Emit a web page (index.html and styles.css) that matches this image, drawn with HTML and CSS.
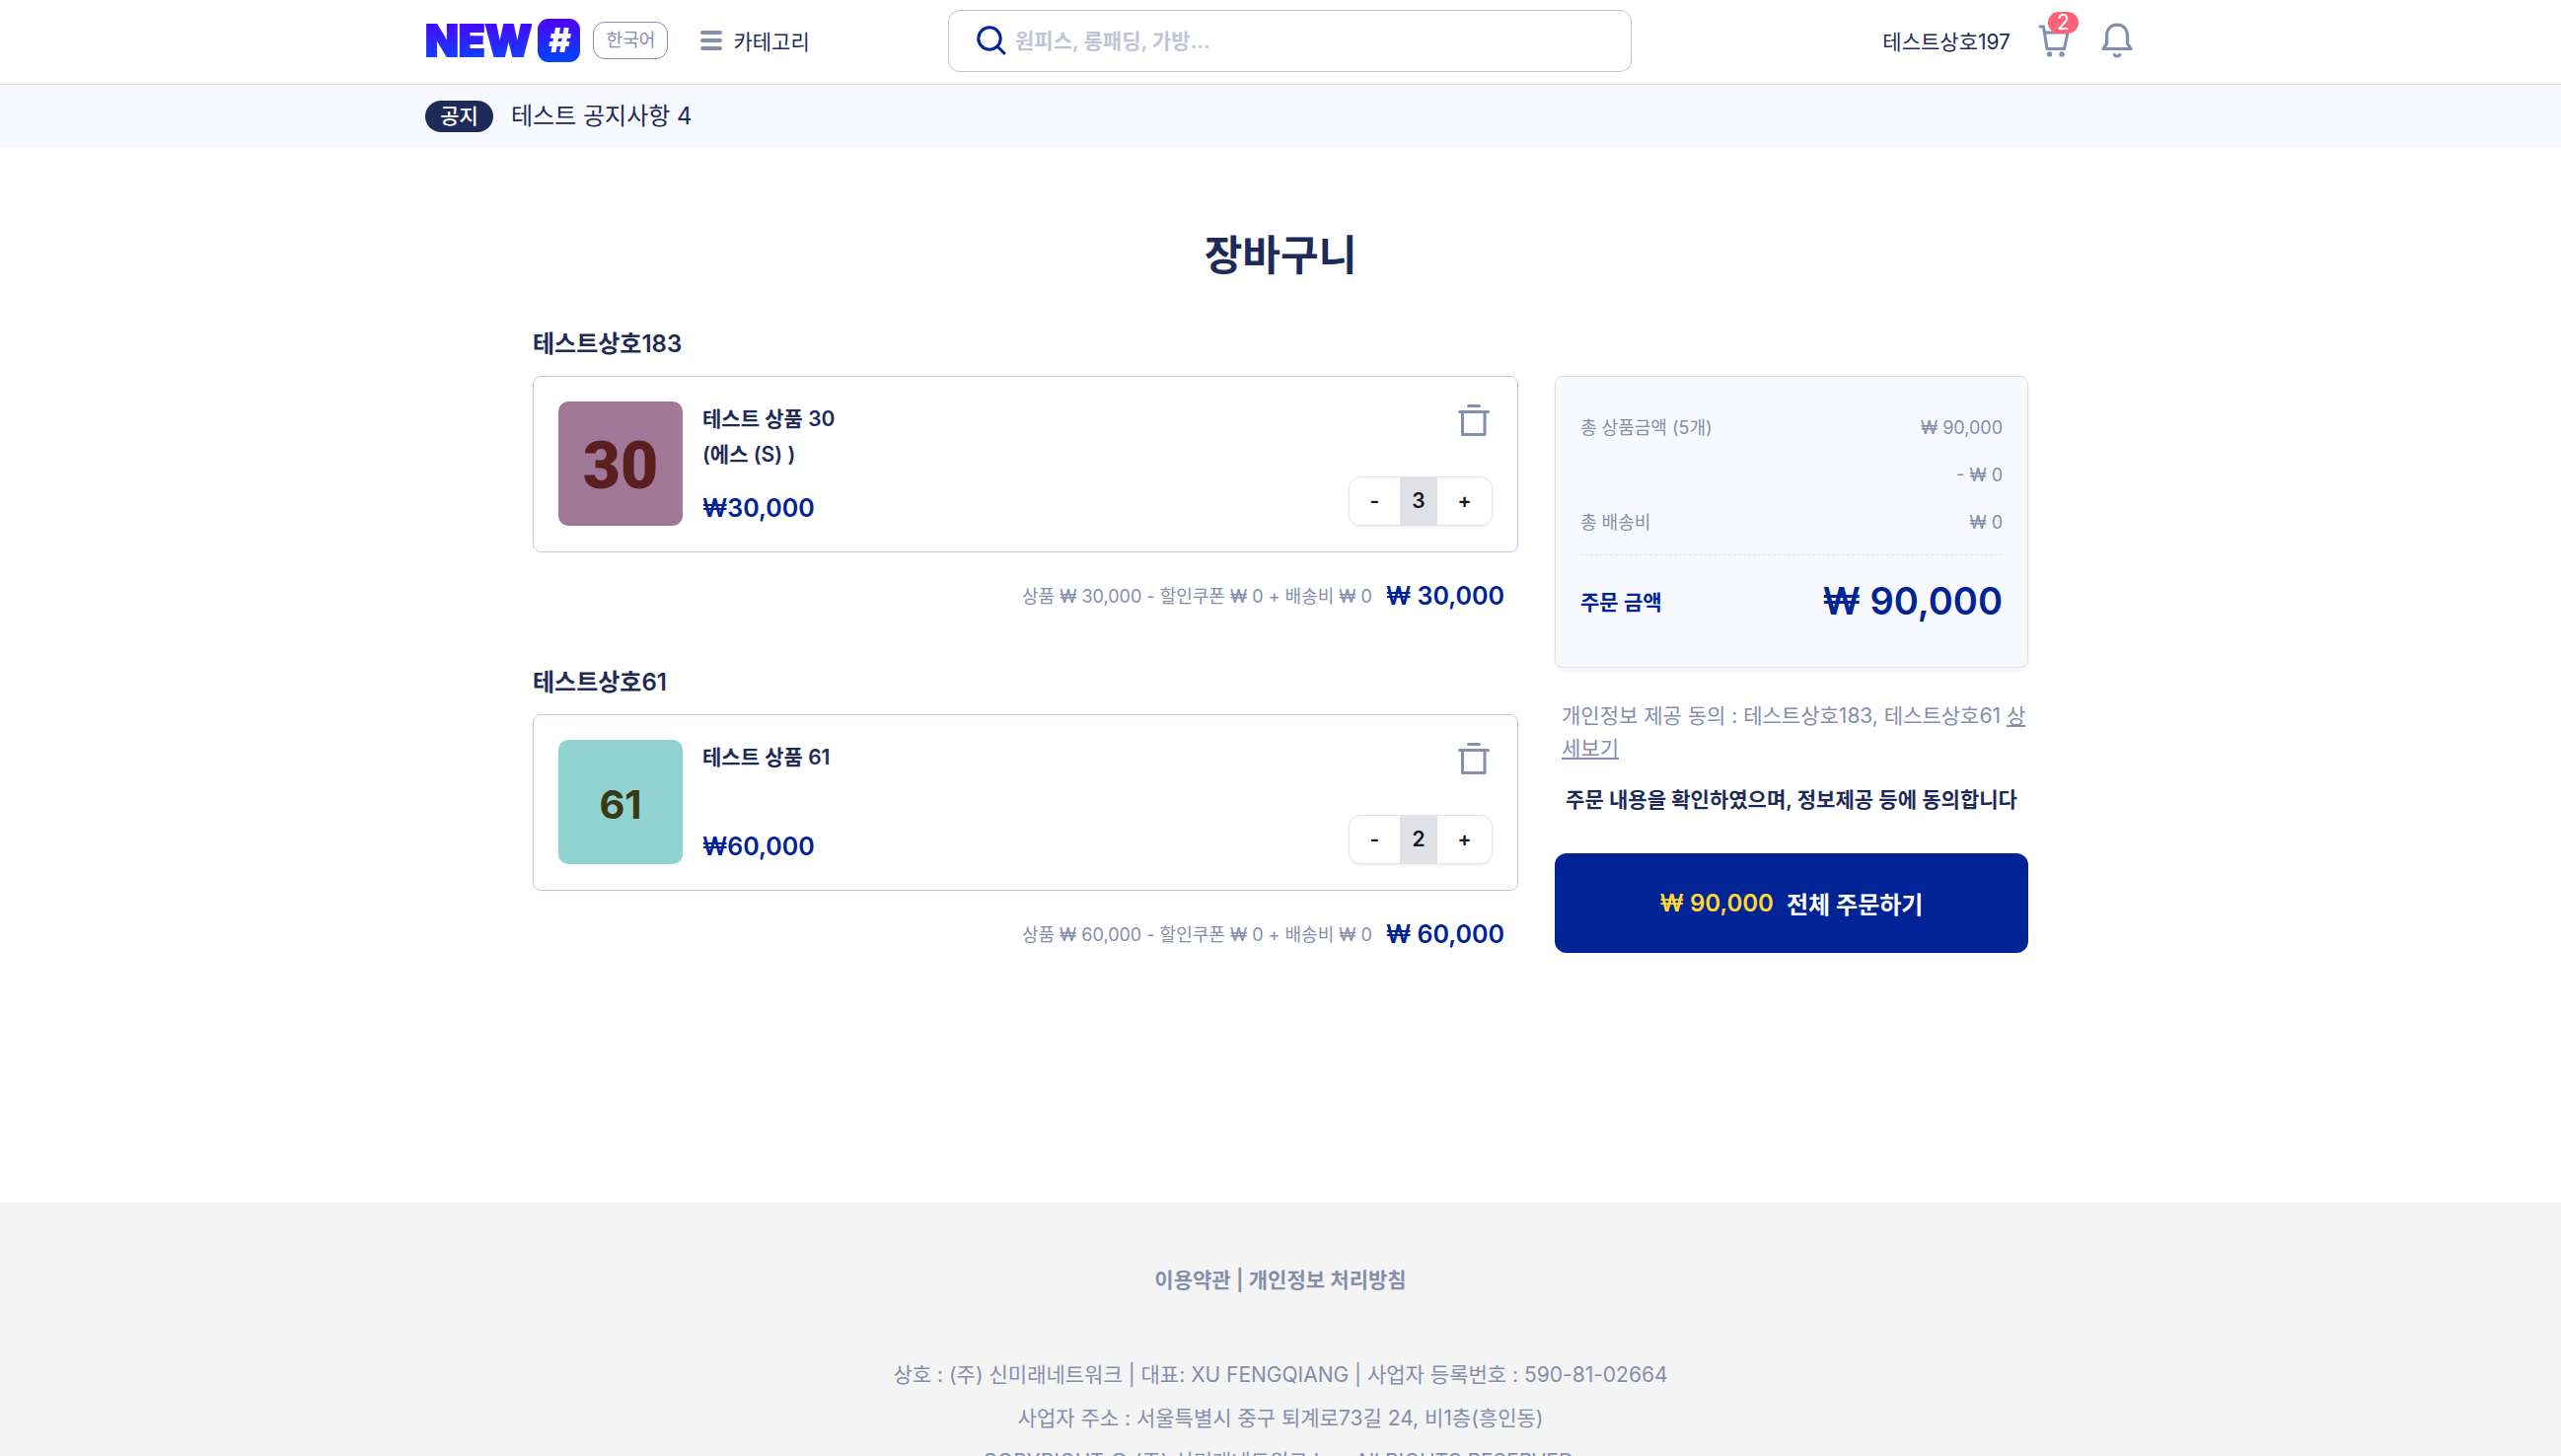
FILE: index.html
```html
<!DOCTYPE html>
<html lang="ko">
<head>
<meta charset="utf-8">
<meta name="viewport" content="width=device-width, initial-scale=1">
<title>장바구니</title>
<link rel="stylesheet" href="styles.css">
</head>
<body>
<header class="header">
  <div class="container header-row">
    <div class="header-left">
      <a class="logo" href="#"><span class="logo-word">NEW</span><span class="logo-hash">#</span></a>
      <button class="lang" type="button">한국어</button>
      <button class="category" type="button">
        <svg width="22" height="20" viewBox="0 0 22 20" aria-hidden="true"><path d="M2 2h18M2 10h18M2 18h18" stroke="currentColor" stroke-width="4" stroke-linecap="round"/></svg>
        <span>카테고리</span>
      </button>
    </div>
    <form class="search" role="search">
      <svg width="30" height="30" viewBox="0 0 30 30" aria-hidden="true"><g fill="none" stroke="currentColor" stroke-width="3" stroke-linecap="round"><circle cx="13" cy="13" r="11.2"/><path d="M21.5 21.5l6.5 6.5"/></g></svg>
      <input class="search-input" type="text" aria-label="검색" placeholder="원피스, 롱패딩, 가방...">
    </form>
    <nav class="header-right">
      <a class="user" href="#">테스트상호197</a>
      <a class="cart-link" href="#" aria-label="장바구니">
        <svg width="32" height="34" viewBox="0 0 32 34" aria-hidden="true"><g fill="none" stroke="currentColor" stroke-width="3" stroke-linecap="round" stroke-linejoin="round"><path d="M2 3h3.500L9 25.500h17.500L30 9H6.500"/></g><circle cx="11.500" cy="31" r="2.700" fill="currentColor"/><circle cx="24" cy="31" r="2.700" fill="currentColor"/></svg>
        <span class="badge">2</span>
      </a>
      <a class="bell-link" href="#" aria-label="알림">
        <svg width="32" height="36" viewBox="0 0 32 36" aria-hidden="true"><g fill="none" stroke="currentColor" stroke-width="3.200" stroke-linecap="round" stroke-linejoin="round"><path d="M2 26.500h28L26.500 21V12.500C26 6 22 2.200 16 2.200S6 6 5.600 12.500V21z"/><path d="M13.200 32.500c1.300 2 4.300 2 5.600 0"/></g></svg>
      </a>
    </nav>
  </div>
</header>

<section class="notice">
  <div class="container notice-row">
    <span class="notice-tag">공지</span>
    <a class="notice-text" href="#">테스트 공지사항 4</a>
  </div>
</section>

<main class="cart">
  <h1 class="title">장바구니</h1>
  <div class="cart-grid">
    <div class="shops">
      <section class="shop">
        <h2 class="shop-name">테스트상호183</h2>
        <article class="item">
          <div class="thumb thumb-plum">30</div>
          <div class="item-info">
            <p class="item-name">테스트 상품 30<br>(에스 (S) )</p>
            <p class="item-price">₩30,000</p>
          </div>
          <div class="item-actions">
            <button class="trash" type="button" aria-label="삭제"><svg width="32" height="32" viewBox="0 0 32 32" aria-hidden="true"><g fill="none" stroke="currentColor" stroke-width="3" stroke-linecap="round" stroke-linejoin="round"><path d="M10.500 1.500h11M1.500 7.500h29M4.500 7.500v23h22.500v-23"/></g></svg></button>
            <div class="qty"><button class="qty-minus" type="button">-</button><output class="qty-value">3</output><button class="qty-plus" type="button">+</button></div>
          </div>
        </article>
        <p class="subtotal"><span>상품 ₩ 30,000 - 할인쿠폰 ₩ 0 + 배송비 ₩ 0</span><strong>₩ 30,000</strong></p>
      </section>
      <section class="shop">
        <h2 class="shop-name">테스트상호61</h2>
        <article class="item">
          <div class="thumb thumb-mint">61</div>
          <div class="item-info">
            <p class="item-name">테스트 상품 61</p>
            <p class="item-price">₩60,000</p>
          </div>
          <div class="item-actions">
            <button class="trash" type="button" aria-label="삭제"><svg width="32" height="32" viewBox="0 0 32 32" aria-hidden="true"><g fill="none" stroke="currentColor" stroke-width="3" stroke-linecap="round" stroke-linejoin="round"><path d="M10.500 1.500h11M1.500 7.500h29M4.500 7.500v23h22.500v-23"/></g></svg></button>
            <div class="qty"><button class="qty-minus" type="button">-</button><output class="qty-value">2</output><button class="qty-plus" type="button">+</button></div>
          </div>
        </article>
        <p class="subtotal"><span>상품 ₩ 60,000 - 할인쿠폰 ₩ 0 + 배송비 ₩ 0</span><strong>₩ 60,000</strong></p>
      </section>
    </div>

    <aside class="order">
      <div class="summary">
        <div class="sum-row"><span>총 상품금액 (5개)</span><span>₩ 90,000</span></div>
        <div class="sum-row sum-discount"><span>- ₩ 0</span></div>
        <div class="sum-row"><span>총 배송비</span><span>₩ 0</span></div>
        <div class="sum-total"><span class="total-label">주문 금액</span><strong class="total-value">₩ 90,000</strong></div>
      </div>
      <p class="consent">개인정보 제공 동의 : 테스트상호183, 테스트상호61 <a href="#">상세보기</a></p>
      <p class="confirm">주문 내용을 확인하였으며, 정보제공 등에 동의합니다</p>
      <button class="order-btn" type="button"><span class="order-price">₩ 90,000</span><span>전체 주문하기</span></button>
    </aside>
  </div>
</main>

<footer class="footer">
  <p class="footer-links"><a href="#">이용약관</a> | <a href="#">개인정보 처리방침</a></p>
  <p class="footer-line">상호 : (주) 신미래네트워크 | 대표: XU FENGQIANG | 사업자 등록번호 : 590-81-02664</p>
  <p class="footer-line">사업자 주소 : 서울특별시 중구 퇴계로73길 24, 비1층(흥인동)</p>
  <p class="footer-line">COPYRIGHT © (주) 신미래네트워크 Inc. All RIGHTS RESERVED.</p>
</footer>
</body>
</html>
```

FILE: styles.css
```css
* {
  box-sizing: border-box;
}

:root {
  --navy: #1e2b58;
  --blue: #002396;
  --gray: #868dad;
  --line: #c0c8e4;
  --pale: #f8f9fe;
}

body {
  margin: 0;
  background: #fff;
  color: var(--navy);
  font-family: Inter, "Noto Sans CJK KR", sans-serif;
  font-size: 21px;
}

h1, h2, p {
  margin: 0;
}

h1, h2, strong {
  font-weight: 600;
}

a {
  color: inherit;
  text-decoration: none;
}

button, input {
  font: inherit;
  color: inherit;
  padding: 0;
  border: 0;
  background: none;
}

svg {
  display: block;
}

.container {
  max-width: 1734px;
  margin: 0 auto;
}

/* Header */
.header {
  border-bottom: 1px solid #dfe1e8;
}

.header-row {
  display: grid;
  grid-template-columns: 530px minmax(0, 693px) 1fr;
  align-items: center;
  height: 85px;
  padding-bottom: 3px;
}

.header-left {
  display: flex;
  align-items: center;
}

.logo {
  display: flex;
  align-items: center;
  gap: 6px;
  font-weight: 900;
}

.logo-word {
  font-size: 44px;
  line-height: 44px;
  background: linear-gradient(#5000ff, #0a46ff);
  -webkit-background-clip: text;
  background-clip: text;
  color: transparent;
  -webkit-text-stroke: 2px transparent;
}

.logo-hash {
  width: 43px;
  height: 44px;
  border-radius: 11px;
  background: linear-gradient(#5000ff, #0046ff);
  color: #fff;
  font-size: 34px;
  line-height: 44px;
  font-style: italic;
  text-align: center;
}

.lang {
  width: 76px;
  height: 38px;
  margin-left: 13px;
  border: 1px solid var(--gray);
  border-radius: 12px;
  color: var(--gray);
  font-size: 18px;
  line-height: 34px;
}

.category {
  display: flex;
  align-items: center;
  gap: 11px;
  margin-left: 33px;
}

.category svg, .cart-link, .bell-link {
  color: var(--gray);
}

.search {
  display: flex;
  align-items: center;
  gap: 9px;
  height: 63px;
  padding: 0 28px;
  border: 1px solid #c4c4c6;
  border-radius: 12px;
  color: var(--blue);
}

.search-input {
  flex: 1;
  outline: 0;
  font-size: 21px;
  font-weight: 600;
}

.search-input::placeholder {
  color: #c0c4d6;
  opacity: 1;
}

.header-right {
  display: flex;
  align-items: center;
  justify-content: flex-end;
  padding-right: 3px;
}

.user {
  margin-right: 28px;
}

.cart-link {
  position: relative;
  margin-right: 32px;
}

.badge {
  position: absolute;
  left: 10px;
  top: -12px;
  width: 31px;
  height: 22px;
  border-radius: 11px;
  background: #fb6478;
  color: #fff;
  line-height: 22px;
  text-align: center;
}

/* Notice bar */
.notice {
  background: var(--pale);
}

.notice-row {
  display: flex;
  align-items: center;
  gap: 18px;
  height: 64px;
}

.notice-tag {
  width: 69px;
  height: 32px;
  border-radius: 16px;
  background: var(--navy);
  color: #fff;
  font-weight: 500;
  line-height: 32px;
  text-align: center;
}

.notice-text {
  font-size: 24px;
  line-height: 36px;
}

/* Cart */
.cart {
  max-width: 1516px;
  min-height: 1069px;
  margin: 0 auto;
  padding-top: 79px;
}

.title {
  font-size: 42px;
  line-height: 60px;
  text-align: center;
}

.cart-grid {
  display: grid;
  grid-template-columns: minmax(0, 1fr) 480px;
  gap: 37px;
  padding-top: 42px;
}

.shop {
  margin-bottom: 52px;
}

.shop-name {
  padding-bottom: 14px;
  font-size: 24px;
  line-height: 36px;
}

.item {
  display: flex;
  gap: 20px;
  padding: 25px 25px 26px;
  border: 1px solid var(--line);
  border-radius: 8px;
}

.thumb {
  width: 126px;
  height: 126px;
  border-radius: 10px;
  line-height: 132px;
  text-align: center;
}

.thumb-plum {
  background: #a27898;
  color: #59201f;
  font-family: Roboto, sans-serif;
  font-size: 66px;
  font-weight: 900;
}

.thumb-mint {
  background: #90d3d1;
  color: #393a13;
  font-size: 40px;
  font-weight: 700;
}

.item-info {
  flex: 1;
  display: flex;
  flex-direction: column;
  justify-content: space-between;
}

.item-name {
  font-size: 21px;
  font-weight: 600;
  line-height: 36px;
}

.item-price {
  color: var(--blue);
  font-size: 25px;
  font-weight: 600;
  line-height: 36px;
}

.item-actions {
  display: flex;
  flex-direction: column;
  align-items: flex-end;
  justify-content: space-between;
}

.trash {
  margin: 3px 3px 0 0;
  color: var(--gray);
}

.qty {
  display: flex;
  height: 50px;
  overflow: hidden;
  border: 1px solid #e4e4e8;
  border-radius: 12px;
  box-shadow: 0 2px 3px rgba(0, 0, 0, 0.06);
  color: #16171b;
  font-size: 21px;
  font-weight: 600;
  line-height: 48px;
  text-align: center;
}

.qty-minus {
  width: 51px;
}

.qty-value {
  width: 38px;
  background: #e0e1e7;
}

.qty-plus {
  width: 55px;
}

.subtotal {
  display: flex;
  align-items: center;
  justify-content: flex-end;
  gap: 14px;
  padding: 27px 14px 0 0;
  color: var(--gray);
  font-size: 18px;
  line-height: 35px;
}

.subtotal strong {
  color: var(--blue);
  font-size: 25px;
}

/* Order summary */
.order {
  padding-top: 50px;
}

.summary {
  padding: 28px 25px 31px;
  border: 1px solid #dfe1ea;
  border-radius: 8px;
  background: var(--pale);
  box-shadow: 0 3px 4px rgba(0, 0, 0, 0.06);
}

.sum-row {
  display: flex;
  justify-content: space-between;
  color: var(--gray);
  font-size: 18px;
  line-height: 48px;
}

.sum-discount {
  justify-content: flex-end;
}

.sum-total {
  display: flex;
  align-items: center;
  justify-content: space-between;
  margin-top: 8px;
  padding-top: 10px;
  border-top: 1px dashed #e2e4ee;
  color: var(--blue);
}

.total-label {
  font-size: 21px;
  font-weight: 600;
}

.total-value {
  font-size: 38px;
  line-height: 72px;
}

.consent {
  padding: 32px 0 0 7px;
  color: var(--gray);
  font-size: 21px;
  line-height: 33px;
}

.consent a {
  text-decoration: underline;
}

.confirm {
  padding: 18px 0 36px;
  font-size: 21px;
  font-weight: 600;
  line-height: 36px;
  text-align: center;
  white-space: nowrap;
}

.order-btn {
  display: flex;
  align-items: center;
  justify-content: center;
  gap: 13px;
  width: 100%;
  height: 101px;
  border-radius: 12px;
  background: var(--blue);
  color: #fff;
  font-size: 24px;
  font-weight: 600;
}

.order-price {
  color: #fed732;
}

/* Footer */
.footer {
  padding: 57px 0;
  background: #f4f4f4;
  color: var(--gray);
  font-size: 21px;
  line-height: 44px;
  text-align: center;
}

.footer-links {
  padding-bottom: 52px;
  font-weight: 600;
}
```
